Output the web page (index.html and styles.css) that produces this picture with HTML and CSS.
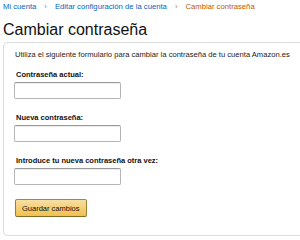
FILE: index.html
```html
<!DOCTYPE html>
<html>
<head>
    <meta charset="UTF-8">
    <title>Cambiar contraseña</title>
    <link rel="stylesheet" href="styles.css">
</head>
<body>
<div class="page">
    <!-- Breadcrumb -->
    <div class="crumbs">
        <a href="#">Mi cuenta</a>
        <span class="sep">›</span>
        <a href="#">Editar configuración de la cuenta</a>
        <span class="sep">›</span>
        <span class="current">Cambiar contraseña</span>
    </div>

    <h1 class="title">Cambiar contraseña</h1>

    <!-- Form box -->
    <div class="box">
        <p class="intro">Utiliza el siguiente formulario para cambiar la contraseña de tu cuenta Amazon.es</p>
        <form>
            <div class="field">
                <label for="old">Contraseña actual:</label>
                <input id="old" type="password">
            </div>
            <div class="field">
                <label for="new">Nueva contraseña:</label>
                <input id="new" type="password">
            </div>
            <div class="field">
                <label for="again">Introduce tu nueva contraseña otra vez:</label>
                <input id="again" type="password">
            </div>
            <button type="button" class="button">Guardar cambios</button>
        </form>
    </div>
</div>
</body>
</html>
```

FILE: styles.css
```css
body {
    margin: 0;
    font-family: "Liberation Sans", Arial, sans-serif;
    color: #111;
}

.page {
    width: 300px;
    height: 240px;
    overflow: hidden;
    box-sizing: border-box;
    padding: 1px 0 0 3px;
}

/* Breadcrumb */
.crumbs {
    font-size: 7.7px;
    line-height: 11px;
    display: flex;
    gap: 8px;
}

.crumbs a {
    color: #0066c0;
    text-decoration: none;
}

.crumbs .sep {
    color: #888;
}

.crumbs .current {
    color: #c45500;
}

/* Heading */
.title {
    margin: 0;
    padding-top: 9px;
    font-size: 16px;
    font-weight: normal;
    line-height: 18px;
    color: #111;
}

/* Box */
.box {
    margin-top: 3px;
    width: 330px;
    border: 1px solid #ddd;
    border-radius: 4px;
    padding: 7px 10px 18px 10px;
}

.intro {
    margin: 0 0 10px 1px;
    font-size: 7.6px;
    line-height: 10px;
    color: #222;
}

.field {
    margin-bottom: 14px;
}

.field label {
    display: block;
    margin: 0 0 2px 2px;
    font-size: 7.5px;
    font-weight: bold;
    line-height: 10px;
}

.field input {
    display: block;
    box-sizing: border-box;
    width: 107px;
    height: 17px;
    margin: 0;
    border: 1px solid #b4b4b4;
    border-top-color: #999;
    border-radius: 2px;
    box-shadow: inset 0 1px 0 rgba(0, 0, 0, 0.07);
}

/* Button */
.button {
    display: block;
    height: 18px;
    padding: 0 6px;
    margin-left: 1px;
    font-family: inherit;
    font-size: 7.5px;
    color: #111;
    background: linear-gradient(to bottom, #f7dfa5, #f0c14b);
    border: 1px solid;
    border-color: #a88734 #9c7e31 #846a29;
    border-radius: 2px;
}
```
